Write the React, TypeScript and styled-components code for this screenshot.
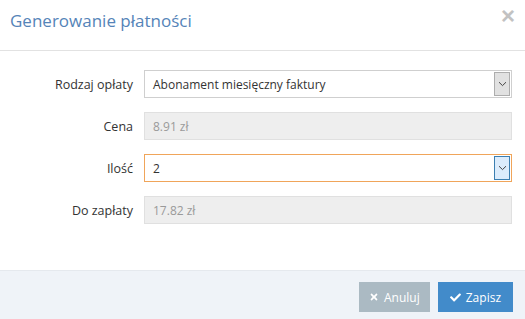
import { FC } from 'react'
import styled, { createGlobalStyle } from 'styled-components'
import { FaTimes, FaCheck } from 'react-icons/fa'

const GlobalStyle = createGlobalStyle`
    html, body {
        margin: 0;
        padding: 0;
        background: #ffffff;
        font-family: "Open Sans", "DejaVu Sans", sans-serif;
    }
`;

const Modal = styled.div`
    width: 525px;
    height: 319px;
    display: flex;
    flex-direction: column;
    background: #ffffff;
    overflow: hidden;
`;

const ModalHeader = styled.div`
    height: 51px;
    box-sizing: border-box;
    border-bottom: 1px solid #e2e2e2;
    display: flex;
    align-items: flex-start;
    justify-content: space-between;
    padding: 8px 10px 0 10px;
`;

const Title = styled.h4`
    margin: 0;
    font-size: 17px;
    font-weight: 400;
    color: #5584b8;
    line-height: 26px;
`;

const Close = styled.span`
    color: #c2c2c2;
    font-family: "Liberation Sans", Arial, sans-serif;
    font-size: 24px;
    font-weight: 700;
    line-height: 16px;
`;

const ModalBody = styled.div`
    flex: 1;
    padding: 19px 13px 0 0;
    display: flex;
    flex-direction: column;
    gap: 14px;
`;

const Row = styled.div`
    display: flex;
    align-items: center;
`;

const Label = styled.label`
    width: 144px;
    box-sizing: border-box;
    padding-right: 11px;
    text-align: right;
    font-size: 12.5px;
    color: #333;
`;

const Field = styled.div<{ $disabled?: boolean, $focused?: boolean }>`
    flex: 1;
    height: 28px;
    box-sizing: border-box;
    display: flex;
    align-items: center;
    padding: 0 1px 0 8px;
    font-size: 12px;
    color: ${p => p.$disabled ? '#9a9a9a' : '#333'};
    background: ${p => p.$disabled ? '#eeeeee' : '#ffffff'};
    border: 1px solid ${p => p.$focused ? '#f0a55a' : p.$disabled ? '#e0e0e0' : '#cfcfcf'};
`;

const Value = styled.span`
    flex: 1;
`;

const Arrow = styled.span<{ $focused?: boolean }>`
    width: 16px;
    height: 24px;
    box-sizing: border-box;
    display: flex;
    align-items: center;
    justify-content: center;
    background: ${p => p.$focused ? '#dcecfc' : '#e1e1e1'};
    border: 1px solid ${p => p.$focused ? '#3c7fb1' : '#adadad'};
`;

const ModalFooter = styled.div`
    height: 49px;
    box-sizing: border-box;
    background: #eff3f8;
    border-top: 1px solid #e5e9ee;
    display: flex;
    justify-content: flex-end;
    align-items: flex-start;
    gap: 8px;
    padding: 11px 12px 0 0;
`;

const Button = styled.button<{ $primary?: boolean }>`
    height: 30px;
    border: none;
    display: flex;
    align-items: center;
    gap: 5px;
    padding: 0 ${p => p.$primary ? 12 : 10}px;
    font-family: "Open Sans", "DejaVu Sans", sans-serif;
    font-size: 12px;
    color: #ffffff;
    background: ${p => p.$primary ? '#428bca' : '#abbac3'};
`;

const Chevron: FC = () => (
    <svg width="9" height="6" viewBox="0 0 9 6">
        <path d="M1 1.2 L4.5 4.6 L8 1.2" fill="none" stroke="#444" strokeWidth="1" />
    </svg>
)

const App: FC = () => {
    return (
        <>
            <GlobalStyle />
            <Modal>
                <ModalHeader>
                    <Title>Generowanie płatności</Title>
                    <Close>×</Close>
                </ModalHeader>
                <ModalBody>
                    <Row>
                        <Label>Rodzaj opłaty</Label>
                        <Field>
                            <Value>Abonament miesięczny faktury</Value>
                            <Arrow><Chevron /></Arrow>
                        </Field>
                    </Row>
                    <Row>
                        <Label>Cena</Label>
                        <Field $disabled><Value>8.91 zł</Value></Field>
                    </Row>
                    <Row>
                        <Label>Ilość</Label>
                        <Field $focused>
                            <Value>2</Value>
                            <Arrow $focused><Chevron /></Arrow>
                        </Field>
                    </Row>
                    <Row>
                        <Label>Do zapłaty</Label>
                        <Field $disabled><Value>17.82 zł</Value></Field>
                    </Row>
                </ModalBody>
                <ModalFooter>
                    <Button><FaTimes size={10} /> Anuluj</Button>
                    <Button $primary><FaCheck size={11} /> Zapisz</Button>
                </ModalFooter>
            </Modal>
        </>
    )
}

export default App;
